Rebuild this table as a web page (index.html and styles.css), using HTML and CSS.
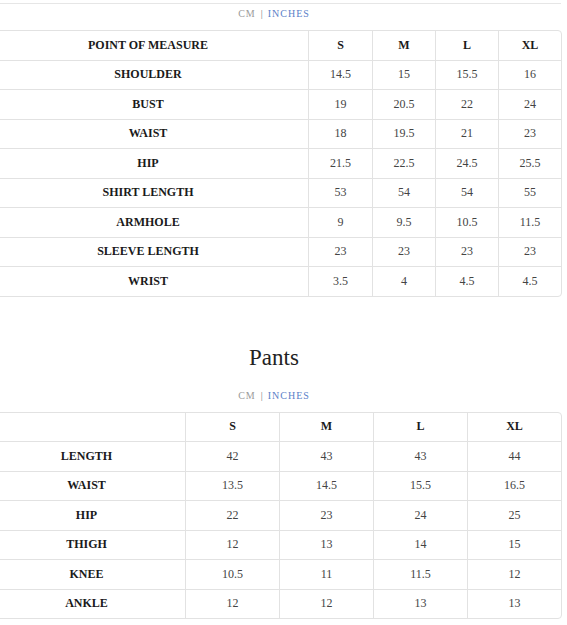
FILE: index.html
```html
<!DOCTYPE html>
<html>
<head>
<meta charset="utf-8">
<link rel="stylesheet" href="styles.css">
</head>
<body>
<div class="page">
  <div class="rule"></div>
  <div class="units units-first"><span class="cm">CM</span><span class="sep">|</span><span class="inches">INCHES</span></div>
  <table class="chart chart-top">
    <colgroup><col class="c-label-wide"><col class="c-s"><col class="c-m"><col class="c-m"><col class="c-m"></colgroup>
    <tr class="head"><th>POINT OF MEASURE</th><th>S</th><th>M</th><th>L</th><th>XL</th></tr>
    <tr><th>SHOULDER</th><td>14.5</td><td>15</td><td>15.5</td><td>16</td></tr>
    <tr><th>BUST</th><td>19</td><td>20.5</td><td>22</td><td>24</td></tr>
    <tr><th>WAIST</th><td>18</td><td>19.5</td><td>21</td><td>23</td></tr>
    <tr><th>HIP</th><td>21.5</td><td>22.5</td><td>24.5</td><td>25.5</td></tr>
    <tr><th>SHIRT LENGTH</th><td>53</td><td>54</td><td>54</td><td>55</td></tr>
    <tr><th>ARMHOLE</th><td>9</td><td>9.5</td><td>10.5</td><td>11.5</td></tr>
    <tr><th>SLEEVE LENGTH</th><td>23</td><td>23</td><td>23</td><td>23</td></tr>
    <tr><th>WRIST</th><td>3.5</td><td>4</td><td>4.5</td><td>4.5</td></tr>
  </table>

  <h2 class="title">Pants</h2>
  <div class="units"><span class="cm">CM</span><span class="sep">|</span><span class="inches">INCHES</span></div>
  <table class="chart chart-pants">
    <colgroup><col class="p-label"><col class="p-size"><col class="p-size"><col class="p-size"><col class="p-size"></colgroup>
    <tr class="head"><th></th><th>S</th><th>M</th><th>L</th><th>XL</th></tr>
    <tr><th>LENGTH</th><td>42</td><td>43</td><td>43</td><td>44</td></tr>
    <tr><th>WAIST</th><td>13.5</td><td>14.5</td><td>15.5</td><td>16.5</td></tr>
    <tr><th>HIP</th><td>22</td><td>23</td><td>24</td><td>25</td></tr>
    <tr><th>THIGH</th><td>12</td><td>13</td><td>14</td><td>15</td></tr>
    <tr><th>KNEE</th><td>10.5</td><td>11</td><td>11.5</td><td>12</td></tr>
    <tr><th>ANKLE</th><td>12</td><td>12</td><td>13</td><td>13</td></tr>
  </table>
</div>
</body>
</html>
```

FILE: styles.css
```css
html, body {
  margin: 0;
  padding: 0;
  background: #ffffff;
  overflow: hidden;
}

body {
  font-family: "Liberation Serif", "DejaVu Serif", serif;
  color: #333;
}

.page {
  margin-left: -13px;
  width: 574px;
}

.rule {
  height: 3px;
  border-bottom: 1px solid #e6e6e6;
}

.units {
  text-align: center;
  font-family: "Liberation Serif", "DejaVu Serif", serif;
  font-size: 10px;
  line-height: 12px;
  letter-spacing: 1px;
  padding-bottom: 10px;
}

.units-first {
  padding-top: 4px;
}

.units .cm {
  color: #9a9a9a;
}

.units .sep {
  color: #777;
  margin: 0 4px 0 5px;
}

.units .inches {
  color: #5a80c8;
}

.chart {
  width: 574px;
  table-layout: fixed;
  border-collapse: separate;
  border-spacing: 0;
  border: 1px solid #e2e2e2;
  border-radius: 4px;
  font-family: "Liberation Serif", "DejaVu Serif", serif;
  font-size: 12px;
}

.c-label-wide { width: 320px; }
.c-s { width: 64px; }
.c-m { width: 63px; }

.p-label { width: 197px; }
.p-size { width: 94px; }

.chart th,
.chart td {
  height: 28.5px;
  padding: 0;
  text-align: center;
  vertical-align: middle;
  border-top: 1px solid #e2e2e2;
  border-left: 1px solid #e2e2e2;
}

.chart tr:first-child th,
.chart tr:first-child td {
  border-top: none;
}

.chart th:first-child {
  border-left: none;
}

.chart th {
  font-weight: bold;
  color: #1a1a1a;
}

.chart td {
  font-weight: normal;
  color: #444;
}

.title {
  margin: 47px 0 18px;
  text-align: center;
  font-family: "Liberation Serif", "DejaVu Serif", serif;
  font-weight: normal;
  font-size: 23px;
  line-height: 28px;
  color: #222;
}
```
